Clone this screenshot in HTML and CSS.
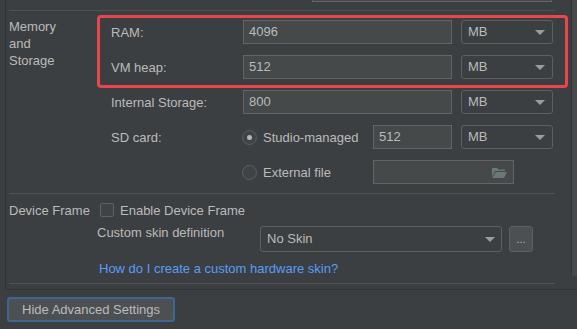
FILE: index.html
```html
<!DOCTYPE html>
<html>
<head>
    <title>Virtual Device Configuration - Advanced Settings</title>
    <link rel="stylesheet" href="styles.css">
</head>
<body>
    <div class="panel">
        <div class="content">
            <div class="prev-field"></div>
            <div class="separator first"></div>

            <div class="section memory">
                <div class="section-label">Memory<br>and<br>Storage</div>
                <div class="section-body">
                    <div class="highlight">
                        <div class="row">
                            <span class="row-label">RAM:</span>
                            <div class="field wide">4096</div>
                            <div class="combo unit">MB<span class="arrow"></span></div>
                        </div>
                        <div class="row">
                            <span class="row-label">VM heap:</span>
                            <div class="field wide">512</div>
                            <div class="combo unit">MB<span class="arrow"></span></div>
                        </div>
                    </div>
                    <div class="rows">
                        <div class="row">
                            <span class="row-label">Internal Storage:</span>
                            <div class="field wide">800</div>
                            <div class="combo unit">MB<span class="arrow"></span></div>
                        </div>
                        <div class="row">
                            <span class="row-label">SD card:</span>
                            <label class="radio-option"><span class="radio checked"></span>Studio-managed</label>
                            <div class="field narrow">512</div>
                            <div class="combo unit">MB<span class="arrow"></span></div>
                        </div>
                        <div class="row">
                            <span class="row-label"></span>
                            <label class="radio-option"><span class="radio"></span>External file</label>
                            <div class="field file">
                                <svg class="folder" width="15" height="11" viewBox="0 0 15 11">
                                    <path d="M0 1 H5 L6.5 2.5 H13 V4 H3 L0 10 Z" fill="#6b7879"/>
                                    <path d="M3.5 5 H15 L12 11 H0.5 Z" fill="#6b7879"/>
                                </svg>
                            </div>
                        </div>
                    </div>
                </div>
            </div>

            <div class="separator middle"></div>

            <div class="section device">
                <div class="check-row">
                    <span class="device-label">Device Frame</span>
                    <span class="checkbox"></span>
                    <span>Enable Device Frame</span>
                </div>
                <div class="skin-row">
                    <span class="skin-label">Custom skin definition</span>
                    <div class="combo skin">No Skin<span class="arrow"></span></div>
                    <button class="more">...</button>
                </div>
                <a class="help-link" href="#">How do I create a custom hardware skin?</a>
            </div>

            <div class="separator last"></div>
        </div>
        <div class="scrollbar"></div>
    </div>

    <button class="toggle-advanced">Hide Advanced Settings</button>
</body>
</html>
```

FILE: styles.css
```css
body {
    margin: 0;
    width: 577px;
    height: 329px;
    overflow: hidden;
    background: #3c3f41;
    color: #bbbbbb;
    font-family: "Liberation Sans", Arial, sans-serif;
    font-size: 13px;
    line-height: 17px;
}
.panel {
    display: flex;
    height: 289px;
    margin-left: 5px;
    border-left: 1px solid #303234;
    border-bottom: 1px solid #303234;
}
.content {
    flex: 1;
    padding-left: 3px;
}
.scrollbar {
    width: 5px;
    height: 276px;
    border-left: 1px solid #323436;
    background: #47494b;
}
.prev-field {
    margin-left: 303px;
    width: 238px;
    height: 1px;
    background: #45494a;
    border: 1px solid #646464;
    border-top: none;
}
.separator {
    height: 1px;
    margin-right: 16px;
    background: #515151;
}
.separator.first {
    margin-top: 8px;
}
.separator.middle {
    margin-top: 9px;
}
.separator.last {
    margin-top: 6px;
}
.section.memory {
    display: flex;
    margin-top: 4px;
}
.section-label {
    width: 88px;
    padding-top: 3px;
}
.section-body {
    width: 471px;
}
.highlight {
    box-sizing: border-box;
    width: 471px;
    padding: 2px 12px 6px 11px;
    border: 3px solid #e8464b;
    border-radius: 4px;
}
.rows {
    padding: 2px 12px 0 14px;
}
.row {
    display: flex;
    align-items: center;
    height: 24px;
}
.row + .row {
    margin-top: 11px;
}
.row-label {
    width: 132px;
    flex: none;
}
.field {
    box-sizing: border-box;
    height: 24px;
    padding: 0 5px;
    line-height: 22px;
    background: #45494a;
    border: 1px solid #646464;
    color: #bbbbbb;
    position: relative;
}
.field.wide {
    width: 209px;
}
.field.narrow {
    width: 79px;
}
.field.file {
    width: 141px;
}
.folder {
    position: absolute;
    right: 6px;
    top: 6px;
}
.combo {
    box-sizing: border-box;
    position: relative;
    height: 24px;
    padding-left: 6px;
    line-height: 22px;
    border: 1px solid #5e6060;
    border-radius: 3px;
    background: #3c3f41;
    color: #bbbbbb;
}
.combo.unit {
    width: 92px;
    margin-left: 9px;
}
.arrow {
    position: absolute;
    right: 7px;
    top: 9px;
    border-left: 5px solid transparent;
    border-right: 5px solid transparent;
    border-top: 5px solid #9a9c9e;
}
.radio-option {
    display: flex;
    align-items: center;
    width: 130px;
    margin-left: -1px;
    margin-right: 1px;
}
.radio {
    box-sizing: border-box;
    width: 15px;
    height: 15px;
    margin-right: 6px;
    border: 1px solid #5d6062;
    border-radius: 50%;
    background: #3f4345;
    position: relative;
}
.radio.checked::after {
    content: "";
    position: absolute;
    left: 4px;
    top: 4px;
    width: 5px;
    height: 5px;
    border-radius: 50%;
    background: #b5b5b5;
}
.section.device {
    padding-top: 6px;
}
.check-row {
    display: flex;
    align-items: center;
    height: 20px;
}
.device-label {
    width: 91px;
}
.checkbox {
    box-sizing: border-box;
    width: 14px;
    height: 14px;
    margin-right: 6px;
    border: 1px solid #5f6264;
    border-radius: 2px;
    background: #3f4345;
}
.skin-row {
    display: flex;
    align-items: flex-start;
    margin-top: 6px;
    margin-left: 88px;
}
.skin-label {
    width: 163px;
    line-height: 13px;
}
.combo.skin {
    width: 242px;
    height: 26px;
    line-height: 24px;
    padding-left: 6px;
}
.combo.skin .arrow {
    right: 6px;
    top: 10px;
}
.more {
    box-sizing: border-box;
    width: 24px;
    height: 26px;
    margin-left: 7px;
    padding: 0;
    border: 1px solid #5e6060;
    border-radius: 3px;
    background: #4c5052;
    color: #bbbbbb;
    font-family: "Liberation Sans", Arial, sans-serif;
    font-size: 11px;
}
.help-link {
    display: block;
    margin: 8px 0 0 90px;
    color: #589df6;
    text-decoration: none;
}
.toggle-advanced {
    display: block;
    box-sizing: border-box;
    width: 168px;
    height: 25px;
    margin: 7px 0 0 7px;
    padding: 0 0 0 13px;
    text-align: left;
    background: #4c5052;
    color: #bbbbbb;
    border: 2px solid #3e6690;
    border-radius: 3px;
    font-family: "Liberation Sans", Arial, sans-serif;
    font-size: 13px;
}
```
